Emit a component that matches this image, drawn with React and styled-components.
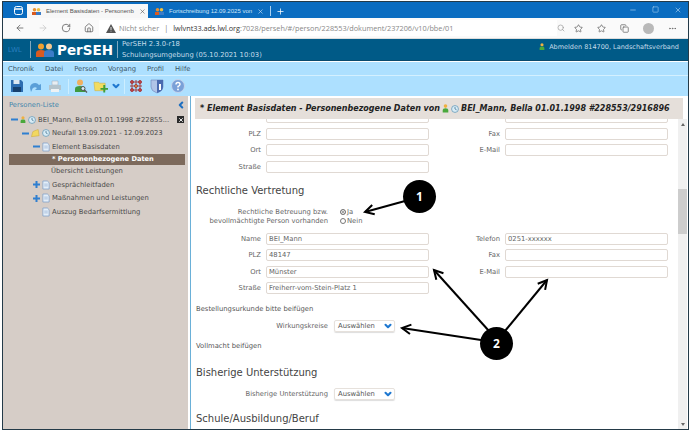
import React from 'react'
import styled, { createGlobalStyle } from 'styled-components'
import { ArrowLeft, ArrowRight, RotateCw, Home, X, Plus, Minus, Square, Search, Star, Copy, MoreHorizontal, ChevronLeft, ChevronDown } from 'lucide-react'

const GlobalStyle = createGlobalStyle`
  html, body { margin: 0; padding: 0; background: #fff; overflow: hidden; }
  * { box-sizing: border-box; }
`

const Frame = styled.div`
  position: relative;
  width: 687px;
  height: 429px;
  margin: 1px 0 0 2px;
  border: 1px solid #243a48;
  display: flex;
  flex-direction: column;
  overflow: hidden;
  font-family: "DejaVu Sans", sans-serif;
  background: #fff;
`

/* browser chrome */
const TabStrip = styled.div`
  height: 16px;
  flex: none;
  background: #0a6cc0;
  display: flex;
  align-items: flex-end;
  padding-left: 7px;
  color: #fff;
`
const WindowBtn = styled.div`
  width: 17px;
  height: 16px;
  display: flex;
  align-items: center;
  justify-content: center;
`
const Tab = styled.div`
  width: ${p => p.$w}px;
  flex: none;
  height: 14px;
  display: flex;
  align-items: center;
  gap: 5px;
  padding: 0 5px;
  margin-right: 2px;
  background: ${p => (p.$active ? '#f7f7f7' : 'transparent')};
  color: ${p => (p.$active ? '#555' : '#cfe4f7')};
  font-family: "Liberation Sans", sans-serif;
  font-size: 6px;
  white-space: nowrap;
  svg { flex: none; }
`
const TabText = styled.span`
  flex: 1;
`
const TabDivider = styled.div`
  width: 1px;
  height: 10px;
  margin: 0 5px 2px 0;
  background: #a9d0f0;
`
const WindowControls = styled.div`
  margin-left: auto;
  display: flex;
  gap: 15px;
  align-self: center;
  padding-right: 6px;
  color: #a9d0f0;
`
const AddressBar = styled.div`
  height: 21px;
  flex: none;
  background: #fafafa;
  display: flex;
  align-items: center;
  padding-left: 12px;
  color: #666;
  border-bottom: 1px solid #ddd;
`
const NavIcons = styled.div`
  width: 84px;
  flex: none;
  display: flex;
  gap: 13px;
  svg:nth-child(2) { color: #ccc; }
`
const Omnibox = styled.div`
  width: 458px;
  flex: none;
  height: 16px;
  background: #fff;
  display: flex;
  align-items: center;
  padding-left: 7px;
  gap: 3px;
  font-family: "Open Sans", sans-serif;
  font-size: 7.3px;
  white-space: nowrap;
  color: #888;
`
const Host = styled.span`
  color: #333;
`
const BarDivider = styled.span`
  color: #777;
  margin: 0 2px;
`
const BrowserIcons = styled.div`
  display: flex;
  align-items: center;
  gap: 14px;
  color: #666;
  svg:first-child { margin-right: -5px; color: #999; }
`
const Avatar = styled.div`
  width: 11px;
  height: 11px;
  border-radius: 50%;
  background: #b9b9b9;
`

/* app header */
const AppHeader = styled.div`
  height: 22px;
  flex: none;
  background: #005a87;
  display: flex;
  align-items: center;
  padding-left: 5px;
  color: #c4dcea;
  border-bottom: 1px solid #0a4a6c;
`
const Lwl = styled.span`
  width: 22px;
  font-family: "Liberation Sans", sans-serif;
  font-size: 7px;
  color: #2a7fc0;
`
const HeaderDivider = styled.div`
  width: 1px;
  height: 17px;
  background: #7fa9c0;
`
const Brand = styled.div`
  display: flex;
  align-items: center;
  gap: 3px;
  width: 86px;
  padding-left: 5px;
  font-weight: 700;
  font-size: 13.5px;
  color: #fff;
`
const Version = styled.div`
  padding-left: 4px;
  font-size: 6.8px;
  line-height: 10.5px;
`
const Logout = styled.div`
  margin-left: auto;
  padding: 0 9px 6px 0;
  display: flex;
  align-items: center;
  gap: 4px;
  font-size: 6.5px;
`

/* menu and toolbar */
const MenuBar = styled.div`
  height: 14px;
  flex: none;
  margin-top: 1px;
  background: #ade0ff;
  display: flex;
  align-items: center;
  padding-left: 5px;
  gap: 11px;
  font-size: 6.8px;
  color: #3a5566;
  border-bottom: 1px solid #d4f0ff;
`
const ToolBar = styled.div`
  height: 20px;
  flex: none;
  background: #ade0ff;
  display: flex;
  align-items: center;
  padding-left: 6px;
`
const ToolButton = styled.div`
  width: ${p => p.$w}px;
  flex: none;
  display: flex;
  align-items: center;
  justify-content: center;
`
const ToolDivider = styled.div`
  width: 1px;
  height: 15px;
  margin-left: ${p => p.$left}px;
  background: #cdeeff;
`

/* body */
const Body = styled.div`
  flex: 1;
  min-height: 0;
  display: flex;
`
const Sidebar = styled.div`
  width: 185px;
  flex: none;
  background: #d6cdc7;
  padding-top: 3px;
`
const SidebarHead = styled.div`
  height: 11px;
  display: flex;
  align-items: center;
  justify-content: space-between;
  padding: 0 2px 0 6px;
  margin-bottom: 3px;
  font-size: 6.8px;
  color: #4287ad;
`
const Tree = styled.div`
  display: flex;
  flex-direction: column;
`
const TreeRow = styled.div`
  height: ${p => p.$h || 13.5}px;
  display: flex;
  align-items: center;
  gap: 2px;
  margin: 0 3px 0 6px;
  padding-left: ${p => p.$indent}px;
  font-size: ${p => (p.$selected ? 6.65 : 6.8)}px;
  white-space: nowrap;
  color: ${p => (p.$selected ? '#fff' : '#4a4a4a')};
  font-weight: ${p => (p.$selected ? 700 : 400)};
  background: ${p => (p.$selected ? '#7d6a5c' : 'transparent')};
`
const CloseBox = styled.span`
  margin-left: auto;
  width: 7px;
  height: 7px;
  margin-right: 1px;
  background: #2b2b2b;
  color: #fff;
  display: flex;
  align-items: center;
  justify-content: center;
`
const Main = styled.div`
  flex: 1;
  min-width: 0;
  margin-left: 2px;
  border-left: 1px solid #6ab0d8;
  padding-top: 2px;
  display: flex;
  flex-direction: column;
`
const TitleBar = styled.div`
  height: 21px;
  flex: none;
  margin: 0 5px 0 4px;
  padding-left: 5px;
  background: #e5dfda;
  display: flex;
  align-items: center;
  gap: 2px;
  font-size: 8px;
  font-weight: 700;
  font-style: italic;
  color: #222;
  white-space: pre;
`
const ContentArea = styled.div`
  flex: 1;
  min-height: 0;
  display: flex;
  overflow: hidden;
`
const Form = styled.div`
  flex: 1;
  min-width: 0;
  margin-top: -8px;
  color: #555;
  font-size: 6.8px;
`
const FieldGrid = styled.div`
  display: grid;
  grid-template-columns: 70px 163px 66px 163px;
  column-gap: 5px;
  row-gap: 4.5px;
  align-items: center;
`
const FieldLabel = styled.label`
  text-align: right;
  color: #666;
`
const Input = styled.div`
  height: 12px;
  padding-left: 2px;
  display: flex;
  align-items: center;
  background: #fff;
  border: 1px solid #e0d9d3;
  border-radius: 2px;
  color: #666;
`
const Section = styled.h2`
  margin: ${p => p.$top}px 0 ${p => p.$bottom}px 5px;
  font-size: 10px;
  font-weight: 400;
  line-height: 13px;
  color: #444;
`
const ChoiceRow = styled.div`
  display: grid;
  grid-template-columns: 137px auto;
  column-gap: 6px;
  align-items: center;
  line-height: 9px;
  color: #666;
  margin-top: ${p => p.$top || 0}px;
  margin-bottom: ${p => p.$bottom || 0}px;
`
const RightText = styled.div`
  text-align: right;
`
const Radios = styled.div`
  display: flex;
  flex-direction: column;
  padding-left: 6px;
`
const RadioRow = styled.div`
  display: flex;
  align-items: center;
  gap: 1px;
  height: 9px;
`
const RadioDot = styled.span`
  width: 6px;
  height: 6px;
  border-radius: 50%;
  border: 1px solid #777;
  background: ${p => (p.$on ? '#888' : '#fff')};
  box-shadow: ${p => (p.$on ? 'inset 0 0 0 1px #fff' : 'none')};
`
const Note = styled.div`
  margin: ${p => p.$top}px 0 0 5px;
  line-height: 9px;
  color: #555;
`
const Select = styled.div`
  width: 61px;
  height: 12px;
  display: flex;
  align-items: center;
  justify-content: space-between;
  padding: 0 1px 0 3px;
  border: 1px solid #e6e1dc;
  border-radius: 2px;
  color: #555;
  box-shadow: 0 1px 1px #ddd;
`
const Scrollbar = styled.div`
  width: 9px;
  flex: none;
  margin-right: 1px;
  background: #f0f0f0;
  position: relative;
`
const ScrollThumb = styled.div`
  position: absolute;
  top: 70px;
  left: 0;
  width: 100%;
  height: 45px;
  background: #cdcdcd;
`
const ScrollArrow = styled.span`
  position: absolute;
  left: 3px;
  ${p => (p.$down ? 'bottom: 3px; border-top: 3px solid #666;' : 'top: 4px; border-bottom: 3px solid #666;')}
  border-left: 2px solid transparent;
  border-right: 2px solid transparent;
`

/* callouts lying over the page */
const Overlay = styled.svg`
  position: absolute;
  left: -3px;
  top: -2px;
  width: 690px;
  height: 432px;
  pointer-events: none;
`
const Badge = styled.div`
  position: absolute;
  left: ${p => p.$x - 19}px;
  top: ${p => p.$y - 18}px;
  width: 33px;
  height: 33px;
  border-radius: 50%;
  background: #000;
  color: #fff;
  display: flex;
  align-items: center;
  justify-content: center;
  font-family: "Open Sans", sans-serif;
  font-weight: 700;
  font-size: 12px;
`

const Person = ({ s = 9 }) => (
  <svg width={s} height={s * 1.2} viewBox="0 0 10 12">
    <circle cx="5" cy="3" r="2.6" fill="#f0b040" />
    <path d="M1 12V8.500Q1 6 5 6t4 2.500V12z" fill="#4aa83c" />
  </svg>
)
const Clock = () => (
  <svg width="8" height="8" viewBox="0 0 10 10">
    <circle cx="5" cy="5" r="4.3" fill="#d8ecf6" stroke="#6a9cb8" />
    <path d="M5 2.500V5l2 1" stroke="#4a7a98" fill="none" />
  </svg>
)
const Doc = () => (
  <svg width="8" height="10" viewBox="0 0 9 10">
    <path d="M1 .5h5l2 2v7H1z" fill="#e4eef8" stroke="#7a9cc8" strokeWidth=".8" />
    <path d="M2.500 4h4M2.500 6h4" stroke="#7a9cc8" strokeWidth=".6" />
  </svg>
)
const Folder = ({ s = 9 }) => (
  <svg width={s} height={s} viewBox="0 0 10 10">
    <path d="M.5 8.500 2 3l2-1 4-1.500 1 7z" fill="#f2d860" stroke="#c8a030" strokeWidth=".5" />
  </svg>
)
const Toggle = ({ plus }) => (
  <svg width="7" height="7" viewBox="0 0 7 7">
    <path d={plus ? 'M0 2.500h2.500V0h2v2.500H7v2H4.500V7h-2V4.500H0z' : 'M0 2.500h7v2H0z'} fill="#2f7fd0" />
  </svg>
)
const Spacer = styled.span`
  width: ${p => p.$w}px;
  flex: none;
`
const Logo = () => (
  <svg width="18" height="14" viewBox="0 0 18 14">
    <circle cx="5" cy="3.500" r="3" fill="#f0a030" />
    <path d="M0 14V10q0-3 5-3t5 3v4z" fill="#d85a20" />
    <circle cx="13" cy="3.500" r="3" fill="#f4c890" />
    <path d="M8 14V10q0-3 5-3t5 3v4z" fill="#3a7cc8" />
  </svg>
)
const Favicon = () => (
  <svg width="9" height="7" viewBox="0 0 18 14">
    <circle cx="5" cy="3.500" r="3.500" fill="#e89030" />
    <path d="M0 14V8h10v6z" fill="#d85a20" />
    <circle cx="13" cy="3.500" r="3.500" fill="#f0c040" />
    <path d="M8 14V8h10v6z" fill="#3a7cc8" />
  </svg>
)
const TabsIcon = () => (
  <svg width="9" height="9" viewBox="0 0 9 9" fill="none" stroke="#fff">
    <rect x=".5" y=".5" width="8" height="8" rx="2" />
    <path d="M1 3h7" strokeWidth="1.500" />
  </svg>
)
const SaveIcon = () => (
  <svg width="14" height="14" viewBox="0 0 14 14">
    <path d="M1 1h10l2 2v10H1z" fill="#2c6cb0" />
    <path d="M3.500 1h6v4h-6z" fill="#dde8f2" />
    <path d="M3 8h8v5H3z" fill="#16406e" />
  </svg>
)
const UndoIcon = () => (
  <svg width="14" height="13" viewBox="0 0 14 13">
    <path d="M2 8a5 5 0 0 1 9-3l2-1v6H7l2-2a3 3 0 0 0-5 2l-1 2z" fill="#5a9fd8" />
  </svg>
)
const PrintIcon = () => (
  <svg width="14" height="13" viewBox="0 0 14 13">
    <path d="M4 1h6v4H4z" fill="#e8eef2" stroke="#9ab" strokeWidth=".5" />
    <path d="M1 5h12v5H1z" fill="#b4c4cc" />
    <path d="M3 9h8v3H3z" fill="#eef2f4" />
  </svg>
)
const UserSearchIcon = () => (
  <svg width="14" height="14" viewBox="0 0 14 14">
    <circle cx="6" cy="3.500" r="3" fill="#f0b060" />
    <path d="M1 13V9.500Q1 7 6 7t5 2.500V13z" fill="#3e9a40" />
    <circle cx="9" cy="9.500" r="2" fill="#d8eef8" stroke="#555" />
    <path d="M10.500 11l2.500 2.500" stroke="#555" strokeWidth="1.200" />
  </svg>
)
const FolderAddIcon = () => (
  <svg width="16" height="14" viewBox="0 0 16 14">
    <path d="M1 3h5l1 1h6v8H2z" fill="#f2dc60" stroke="#c8a838" strokeWidth=".5" />
    <path d="M8 9h3V6h2v3h3v2h-3v3h-2v-3H8z" fill="#3ea03a" />
  </svg>
)
const NetIcon = () => (
  <svg width="14" height="14" viewBox="0 0 14 14" fill="none" stroke="#a04048" strokeWidth="1">
    <path d="M3 3h8v8H3zM7 1v12M1 7h12" />
    <circle cx="3" cy="3" r="1.500" fill="#c84040" />
    <circle cx="11" cy="3" r="1.500" fill="#c84040" />
    <circle cx="3" cy="11" r="1.500" fill="#c84040" />
    <circle cx="11" cy="11" r="1.500" fill="#c84040" />
    <circle cx="7" cy="7" r="1.500" fill="#e0a030" />
  </svg>
)
const ShieldIcon = () => (
  <svg width="14" height="15" viewBox="0 0 14 15">
    <path d="M1 1h12v7q0 4-6 6-6-2-6-6z" fill="#b0c4e8" stroke="#6a84b8" strokeWidth=".6" />
    <path d="M7 1h6v7q0 4-6 6z" fill="#4a6ab0" />
    <path d="M9 5h2v6H9z" fill="#fff" />
  </svg>
)
const HelpIcon = () => (
  <svg width="14" height="14" viewBox="0 0 14 14">
    <circle cx="7" cy="7" r="6.500" fill="#7aa0d8" stroke="#c4d4ec" />
    <path d="M5 5.500Q5 3.500 7 3.500T9 5.500Q9 6.500 7 7.500V8.500" stroke="#fff" strokeWidth="1.400" fill="none" />
    <circle cx="7" cy="10.500" r=".9" fill="#fff" />
  </svg>
)
const WarnIcon = () => (
  <svg width="10" height="9" viewBox="0 0 10 9">
    <path d="M5 0l5 9H0z" fill="#555" />
    <path d="M4.600 3h.8v3h-.8zM4.600 6.800h.8v.8h-.8z" fill="#fff" />
  </svg>
)
const BlueChevron = () => <ChevronDown size={10} strokeWidth={5} color="#1f78d0" />

const Field = ({ label, value }) => (
  <>
    <FieldLabel>{label}</FieldLabel>
    <Input>{value}</Input>
  </>
)

const Arrow = ({ x1, y1, x2, y2 }) => {
  const a = Math.atan2(y1 - y2, x1 - x2)
  const len = 10
  const wing = d => `${x2 + len * Math.cos(a + d)},${y2 + len * Math.sin(a + d)}`
  return (
    <g stroke="#000" strokeWidth="2" fill="none">
      <line x1={x1} y1={y1} x2={x2} y2={y2} />
      <polyline points={`${wing(0.5)} ${x2},${y2} ${wing(-0.5)}`} />
    </g>
  )
}

const App = () => (
  <>
    <GlobalStyle />
    <Frame>
      <TabStrip>
        <WindowBtn><TabsIcon /></WindowBtn>
        <Tab $active $w={121}>
          <Favicon />
          <TabText>Element Basisdaten - Personenb</TabText>
          <X size={7} />
        </Tab>
        <Tab $w={118}>
          <Favicon />
          <TabText>Fortschreibung 12.09.2025 von</TabText>
          <X size={7} />
        </Tab>
        <TabDivider />
        <Plus size={9} style={{ marginBottom: 2 }} />
        <WindowControls>
          <Minus size={8} />
          <Square size={7} />
          <X size={8} />
        </WindowControls>
      </TabStrip>
      <AddressBar>
        <NavIcons>
          <ArrowLeft size={10} />
          <ArrowRight size={10} />
          <RotateCw size={10} />
          <Home size={10} />
        </NavIcons>
        <Omnibox>
          <WarnIcon />
          Nicht sicher
          <BarDivider>|</BarDivider>
          <span><Host>lwlvnt33.ads.lwl.org</Host>:7028/perseh/#/person/228553/dokument/237206/v10/bbe/01</span>
        </Omnibox>
        <BrowserIcons>
          <Search size={8} />
          <Star size={9} />
          <Star size={9} />
          <Copy size={9} />
          <Avatar />
          <MoreHorizontal size={9} />
        </BrowserIcons>
      </AddressBar>
      <AppHeader>
        <Lwl>LWL</Lwl>
        <HeaderDivider />
        <Brand><Logo />PerSEH</Brand>
        <HeaderDivider />
        <Version>
          <div>PerSEH 2.3.0-r18</div>
          <div>Schulungsumgebung (05.10.2021 10:03)</div>
        </Version>
        <Logout><Person s={6} />Abmelden 814700, Landschaftsverband</Logout>
      </AppHeader>
      <MenuBar>
        <span>Chronik</span>
        <span>Datei</span>
        <span>Person</span>
        <span>Vorgang</span>
        <span>Profil</span>
        <span>Hilfe</span>
      </MenuBar>
      <ToolBar>
        <ToolButton $w={15}><SaveIcon /></ToolButton>
        <ToolButton $w={22}><UndoIcon /></ToolButton>
        <ToolButton $w={18}><PrintIcon /></ToolButton>
        <ToolDivider $left={4} />
        <ToolButton $w={24}><UserSearchIcon /></ToolButton>
        <ToolButton $w={15}><FolderAddIcon /></ToolButton>
        <ToolButton $w={16}><BlueChevron /></ToolButton>
        <ToolDivider $left={0} />
        <ToolButton $w={21}><NetIcon /></ToolButton>
        <ToolButton $w={21}><ShieldIcon /></ToolButton>
        <ToolButton $w={22}><HelpIcon /></ToolButton>
      </ToolBar>
      <Body>
        <Sidebar>
          <SidebarHead>
            Personen-Liste
            <ChevronLeft size={10} strokeWidth={5} color="#1f6fc0" />
          </SidebarHead>
          <Tree>
            <TreeRow $indent={2}>
              <Toggle /><Person s={6} /><Clock />BEI_Mann, Bella 01.01.1998 #22855...
              <CloseBox><X size={6} strokeWidth={3.5} /></CloseBox>
            </TreeRow>
            <TreeRow $indent={13}><Toggle /><Folder /><Clock />Neufall 13.09.2021 - 12.09.2023</TreeRow>
            <TreeRow $indent={24}><Toggle /><Doc />Element Basisdaten</TreeRow>
            <TreeRow $indent={43} $h={11} $selected>* Personenbezogene Daten</TreeRow>
            <TreeRow $indent={42}>Übersicht Leistungen</TreeRow>
            <TreeRow $indent={24}><Toggle plus /><Doc />Gesprächleitfaden</TreeRow>
            <TreeRow $indent={24}><Toggle plus /><Doc />Maßnahmen und Leistungen</TreeRow>
            <TreeRow $indent={24}><Spacer $w={7} /><Doc />Auszug Bedarfsermittlung</TreeRow>
          </Tree>
        </Sidebar>
        <Main>
          <TitleBar>
            <span>* Element Basisdaten - Personenbezogene Daten von</span>
            <Person s={7} /><Clock />
            <span>BEI_Mann, Bella 01.01.1998 #228553/2916896</span>
          </TitleBar>
          <ContentArea>
            <Form>
              <FieldGrid>
                <Field label="" />
                <Field label="" />
                <Field label="PLZ" />
                <Field label="Fax" />
                <Field label="Ort" />
                <Field label="E-Mail" />
                <Field label="Straße" />
              </FieldGrid>
              <Section $top={11} $bottom={11}>Rechtliche Vertretung</Section>
              <ChoiceRow $bottom={7}>
                <RightText>Rechtliche Betreuung bzw.<br />bevollmächtigte Person vorhanden</RightText>
                <Radios>
                  <RadioRow><RadioDot $on />Ja</RadioRow>
                  <RadioRow><RadioDot />Nein</RadioRow>
                </Radios>
              </ChoiceRow>
              <FieldGrid>
                <Field label="Name" value="BEI_Mann" />
                <Field label="Telefon" value="0251-xxxxxx" />
                <Field label="PLZ" value="48147" />
                <Field label="Fax" />
                <Field label="Ort" value="Münster" />
                <Field label="E-Mail" />
                <Field label="Straße" value="Freiherr-vom-Stein-Platz 1" />
              </FieldGrid>
              <Note $top={11}>Bestellungsurkunde bitte beifügen</Note>
              <ChoiceRow $top={6}>
                <RightText>Wirkungskreise</RightText>
                <Select>Auswählen<BlueChevron /></Select>
              </ChoiceRow>
              <Note $top={10}>Vollmacht beifügen</Note>
              <Section $top={15} $bottom={9}>Bisherige Unterstützung</Section>
              <ChoiceRow>
                <RightText>Bisherige Unterstützung</RightText>
                <Select>Auswählen<BlueChevron /></Select>
              </ChoiceRow>
              <Section $top={12} $bottom={0}>Schule/Ausbildung/Beruf</Section>
            </Form>
            <Scrollbar>
              <ScrollArrow />
              <ScrollThumb />
              <ScrollArrow $down />
            </Scrollbar>
          </ContentArea>
        </Main>
      </Body>
      <Overlay viewBox="0 0 690 432">
        <Arrow x1={405} y1={201} x2={365} y2={212} />
        <Arrow x1={489} y1={331} x2={434} y2={270} />
        <Arrow x1={505} y1={331} x2={547} y2={280} />
        <Arrow x1={481} y1={340} x2={402} y2={328} />
      </Overlay>
      <Badge $x={419} $y={196}>1</Badge>
      <Badge $x={496} $y={343}>2</Badge>
    </Frame>
  </>
)

export default App
